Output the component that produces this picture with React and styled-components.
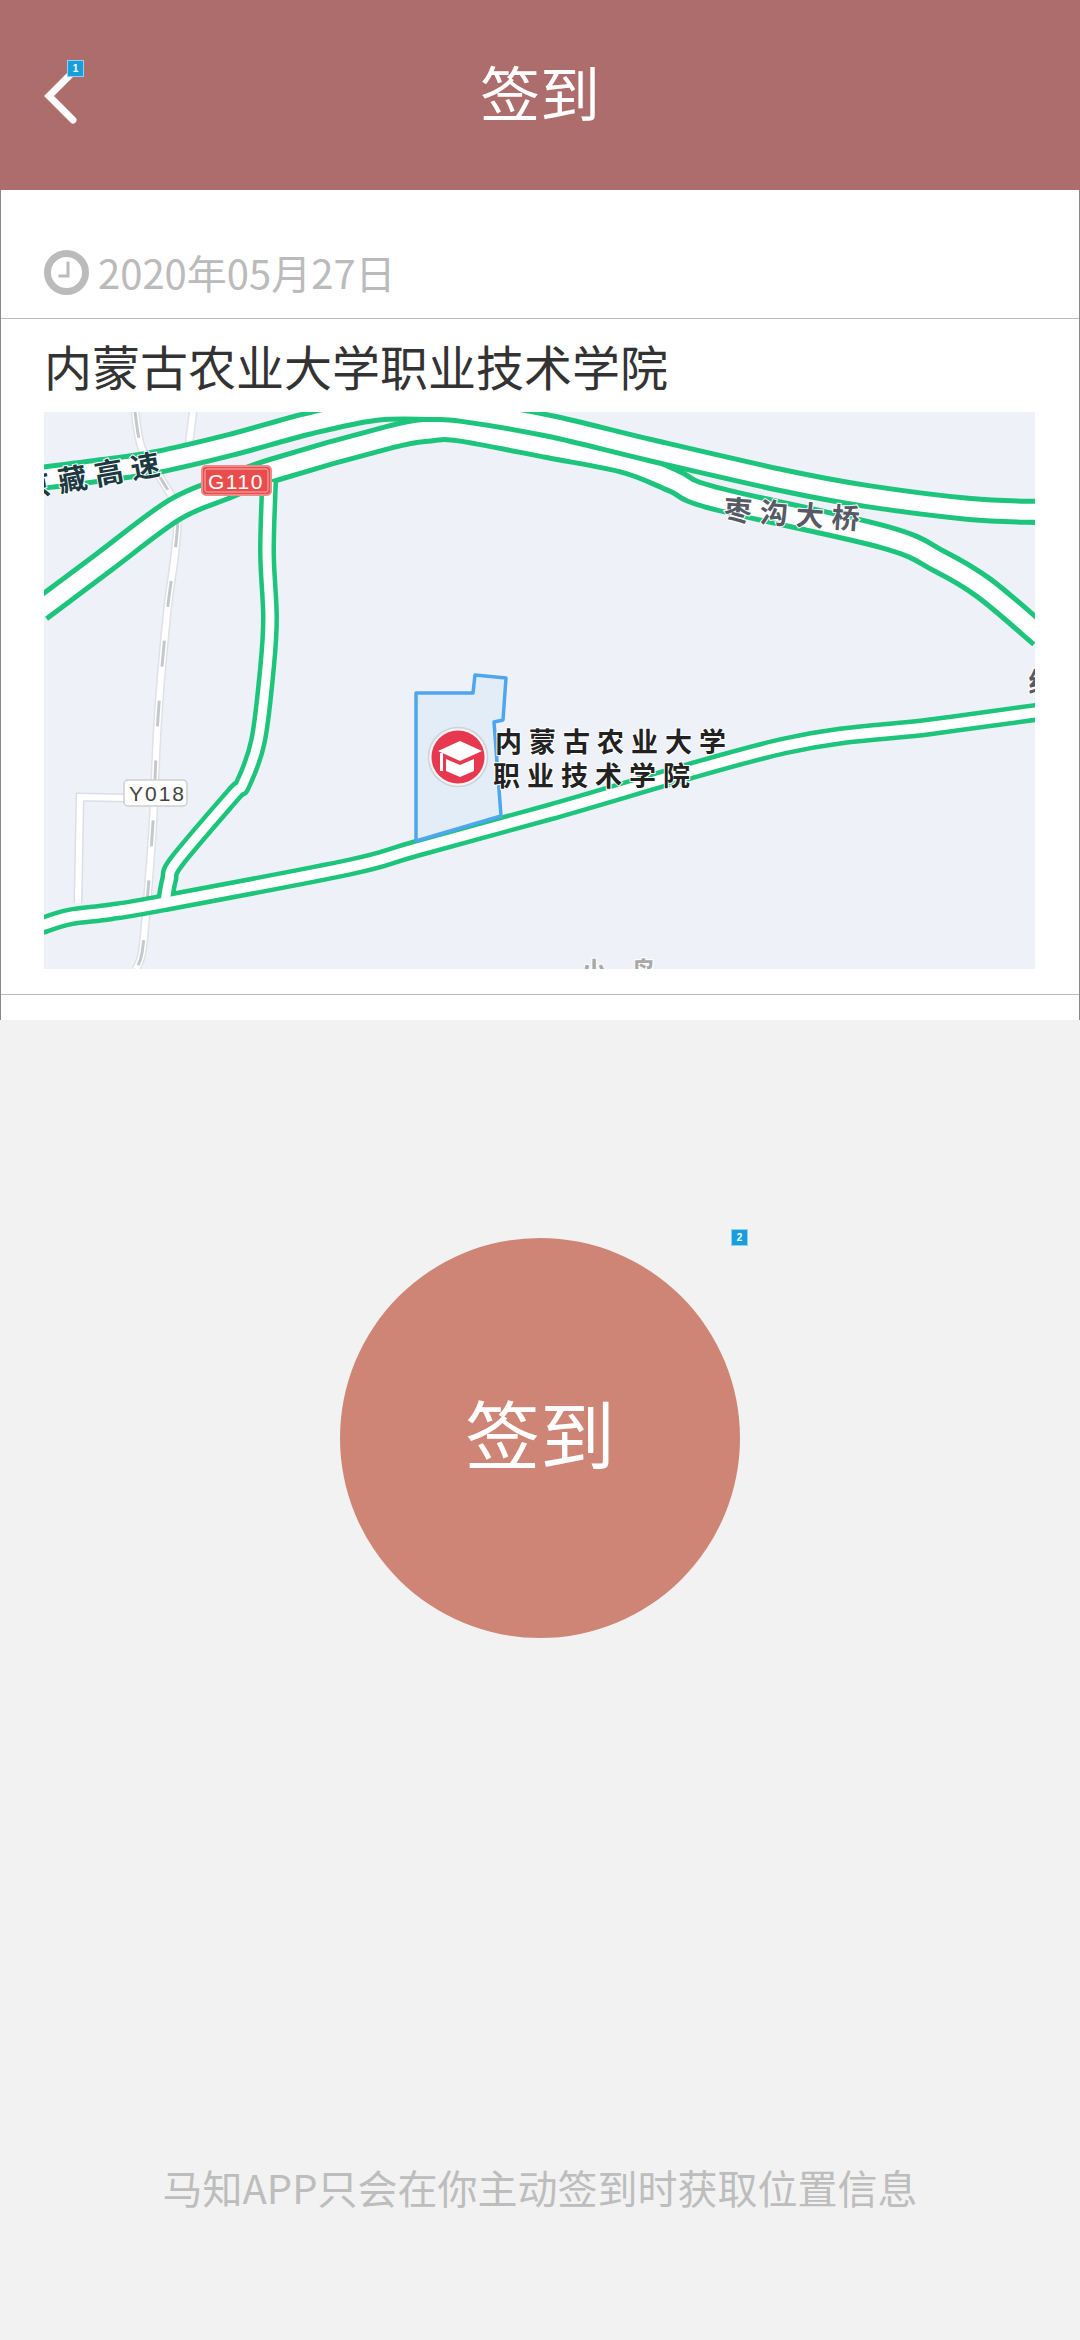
import React from 'react';
import styled, { createGlobalStyle } from 'styled-components';

const GlobalStyle = createGlobalStyle`
  html, body {
    margin: 0;
    padding: 0;
    background: #f2f2f2;
    font-family: "Noto Sans CJK SC", "Noto Sans", sans-serif;
  }
`;

const Screen = styled.div`
  width: 1080px;
  height: 2340px;
  display: flex;
  flex-direction: column;
  overflow: hidden;
  background: #f2f2f2;
`;

const Header = styled.header`
  height: 190px;
  flex: none;
  display: grid;
  grid-template-columns: 1fr auto 1fr;
  align-items: center;
  background: #ad6d6c;
`;

const BackButton = styled.div`
  position: relative;
  width: 40px;
  height: 60px;
  margin-left: 42px;
`;

const Badge = styled.span`
  position: absolute;
  top: ${({ $top }) => $top}px;
  right: ${({ $right }) => $right}px;
  width: 17px;
  height: 17px;
  box-sizing: border-box;
  display: flex;
  align-items: center;
  justify-content: center;
  background: #1a9edb;
  border: 1px solid #8fd3f4;
  color: #fff;
  font-family: "Liberation Sans", sans-serif;
  font-size: 10px;
  font-weight: 700;
  line-height: 1;
`;

const HeaderTitle = styled.h1`
  margin: 0 0 8px;
  color: #fff;
  font-size: 60px;
  font-weight: 400;
  line-height: 80px;
`;

const Panel = styled.section`
  height: 830px;
  flex: none;
  box-sizing: border-box;
  background: #fff;
  border-left: 1px solid #8a8a8a;
  border-right: 1px solid #8a8a8a;
`;

const DateRow = styled.div`
  height: 129px;
  box-sizing: border-box;
  display: flex;
  align-items: flex-end;
  gap: 9px;
  padding: 0 0 23px 43px;
  border-bottom: 1px solid #bbb;
`;

const DateText = styled.span`
  color: #bbb;
  font-size: 40px;
  line-height: 45px;
`;

const SchoolBlock = styled.div`
  padding: 0 44px 25px 43px;
  border-bottom: 1px solid #bbb;
`;

const SchoolName = styled.div`
  height: 93px;
  color: #333;
  font-size: 48px;
  line-height: 93px;
`;

const MapBox = styled.div`
  width: 991px;
  height: 557px;
  background: #eef1f8;

  svg {
    display: block;
  }
`;

const MapLabel = styled.text`
  font-family: "Noto Sans CJK SC", sans-serif;
  font-weight: 700;
  font-size: ${({ $size }) => $size || 27}px;
  fill: ${({ $color }) => $color || '#222'};
  letter-spacing: ${({ $spacing }) => $spacing || 7}px;
  stroke: #fff;
  stroke-width: 2px;
  paint-order: stroke;
`;

const SignText = styled.text`
  font-family: "Liberation Sans", sans-serif;
  font-size: 21px;
  fill: ${({ $color }) => $color};
  letter-spacing: ${({ $spacing }) => $spacing}px;
`;

const SignArea = styled.main`
  flex: 1;
  display: flex;
  flex-direction: column;
  align-items: center;
  padding-top: 218px;
`;

const SignButton = styled.div`
  position: relative;
  width: 400px;
  height: 400px;
  box-sizing: border-box;
  padding-bottom: 14px;
  display: flex;
  align-items: center;
  justify-content: center;
  border-radius: 50%;
  background: #ce8576;
  color: #fff;
  font-size: 75px;
  line-height: 1;
`;

const Hint = styled.p`
  margin: 519px 0 0;
  color: #bdbdbd;
  font-size: 40px;
  line-height: 60px;
`;

const GREEN = '#1dc47c';

// catmull-rom through the points, the map roads are soft curves
function smoothPath(pts) {
  let d = `M${pts[0][0]} ${pts[0][1]}`;
  for (let i = 0; i < pts.length - 1; i++) {
    const p0 = pts[i - 1] || pts[i];
    const p1 = pts[i];
    const p2 = pts[i + 1];
    const p3 = pts[i + 2] || p2;
    const c1x = p1[0] + (p2[0] - p0[0]) / 6;
    const c1y = p1[1] + (p2[1] - p0[1]) / 6;
    const c2x = p2[0] - (p3[0] - p1[0]) / 6;
    const c2y = p2[1] - (p3[1] - p1[1]) / 6;
    d += `C${c1x.toFixed(1)} ${c1y.toFixed(1)} ${c2x.toFixed(1)} ${c2y.toFixed(1)} ${p2[0]} ${p2[1]}`;
  }
  return d;
}

const lowerCarriageway = smoothPath([[-4, 198], [60, 150], [130, 98], [181, 76], [229, 58], [346, 25], [386, 18], [416, 18], [506, 35], [582, 50], [630, 69], [670, 86], [840, 125], [895, 149], [940, 176], [997, 224]]);
const upperCarriageway = smoothPath([[-4, 66], [60, 58], [113, 50], [186, 33], [263, 12], [330, -2], [386, -3], [419, -1], [506, 14], [606, 38], [737, 68], [823, 84], [926, 97], [995, 100]]);
const railLine = smoothPath([[91, 0], [98, 37], [119, 70], [133, 98], [131, 141], [123, 202], [114, 306], [109, 410], [103, 491], [98, 541], [92, 557]]);

const mainRoads = [
  { width: 19, inner: 10, d: smoothPath([[-4, 514], [26, 505], [66, 500], [119, 491], [306, 455], [371, 437], [506, 400], [740, 334], [885, 315], [995, 300]]) },
  { width: 18, inner: 9, d: smoothPath([[225, 70], [223, 141], [226, 206], [223, 256], [214, 329], [199, 372], [189, 383], [133, 449], [125, 468], [121, 490]]) },
];

function BackIcon() {
  return (
    <svg width="40" height="60" viewBox="0 0 40 60">
      <polyline points="31,7 7,31 31,55" fill="none" stroke="#fff" strokeWidth="7" strokeLinecap="round" strokeLinejoin="miter" />
    </svg>
  );
}

function ClockIcon() {
  return (
    <svg width="45" height="45" viewBox="0 0 45 45">
      <circle cx="22.5" cy="22.5" r="19" fill="none" stroke="#bbb" strokeWidth="7" />
      <path d="M24 11.5V26H14.5" fill="none" stroke="#bbb" strokeWidth="3" />
    </svg>
  );
}

function Road({ d, width, inner }) {
  return (
    <>
      <path d={d} fill="none" stroke={GREEN} strokeWidth={width} />
      <path d={d} fill="none" stroke="#fff" strokeWidth={inner} />
    </>
  );
}

function CampusMap() {
  return (
    <svg width="991" height="557" viewBox="0 0 991 557">
      {/* rail and small roads */}
      <path d={railLine} fill="none" stroke="#dfe1e6" strokeWidth="9" />
      <path d={railLine} fill="none" stroke="#fff" strokeWidth="6" />
      <path d={railLine} fill="none" stroke="#c4c7cd" strokeWidth="3" strokeDasharray="26 34" />
      <polyline points="149,0 144,40" fill="none" stroke="#dfe1e6" strokeWidth="9" />
      <polyline points="149,0 144,40" fill="none" stroke="#fff" strokeWidth="6" />
      <polyline points="34,491 36,385 82,386" fill="none" stroke="#dcdee3" strokeWidth="9" />
      <polyline points="34,491 36,385 82,386" fill="none" stroke="#fff" strokeWidth="6" />

      {/* expressway, upper one on top so its edge stays visible */}
      <Road d={lowerCarriageway} width={27} inner={17} />
      <Road d={upperCarriageway} width={26} inner={16} />

      {/* branch road and main road share one junction */}
      {mainRoads.map((road) => (
        <path key={road.d} d={road.d} fill="none" stroke={GREEN} strokeWidth={road.width} />
      ))}
      {mainRoads.map((road) => (
        <path key={road.d} d={road.d} fill="none" stroke="#fff" strokeWidth={road.inner} />
      ))}

      {/* campus */}
      <polygon points="372,281 429,281 431,263 462,266 459,308 450,310 457,404 372,429" fill="#e3edf7" stroke="#4da6ee" strokeWidth="3.5" strokeLinejoin="round" />
      <circle cx="414" cy="345" r="29.5" fill="#f3f4f7" stroke="#cfd2d6" strokeWidth="1.5" />
      <circle cx="414" cy="345" r="26.5" fill="#e8384f" />
      <path d="M394 339L416 329L438 339L416 349Z" fill="#fff" />
      <path d="M402 347L416 353L430 347V359L416 365L402 359Z" fill="#fff" />
      <path d="M396 341H399V359H396Z" fill="#fff" />

      {/* road signs */}
      <rect x="158" y="54" width="69" height="29" rx="4" fill="#e84c4c" stroke="#f08a8a" strokeWidth="2" />
      <rect x="161" y="57" width="63" height="23" rx="2" fill="none" stroke="#f6b1b1" strokeWidth="1" />
      <SignText x="164" y="77" $color="#fff" $spacing="1.5">G110</SignText>
      <rect x="80" y="368" width="63" height="26" rx="4" fill="#fff" stroke="#cfcfcf" strokeWidth="1.5" />
      <SignText x="85" y="389" $color="#444" $spacing="2">Y018</SignText>

      {/* labels */}
      <MapLabel x="-24" y="74" $size="29" $color="#1c3a40" $spacing="8" transform="rotate(-10 50 60)">京藏高速</MapLabel>
      <MapLabel x="680" y="112" $size="28" $color="#555a66" $spacing="8" transform="rotate(4 740 100)">枣沟大桥</MapLabel>
      <MapLabel x="451" y="340">内蒙古农业大学</MapLabel>
      <MapLabel x="449" y="374">职业技术学院</MapLabel>
      <MapLabel x="984" y="280" $color="#555a66">线</MapLabel>
      <MapLabel x="537" y="569" $size="26" $color="#a8a8a8" $spacing="24">小岛</MapLabel>
    </svg>
  );
}

export default function App() {
  return (
    <Screen>
      <GlobalStyle />
      <Header>
        <BackButton>
          <BackIcon />
          <Badge $top={-5} $right={-2}>1</Badge>
        </BackButton>
        <HeaderTitle>签到</HeaderTitle>
      </Header>
      <Panel>
        <DateRow>
          <ClockIcon />
          <DateText>2020年05月27日</DateText>
        </DateRow>
        <SchoolBlock>
          <SchoolName>内蒙古农业大学职业技术学院</SchoolName>
          <MapBox>
            <CampusMap />
          </MapBox>
        </SchoolBlock>
      </Panel>
      <SignArea>
        <SignButton>
          签到
          <Badge $top={-9} $right={-8}>2</Badge>
        </SignButton>
        <Hint>马知APP只会在你主动签到时获取位置信息</Hint>
      </SignArea>
    </Screen>
  );
}
